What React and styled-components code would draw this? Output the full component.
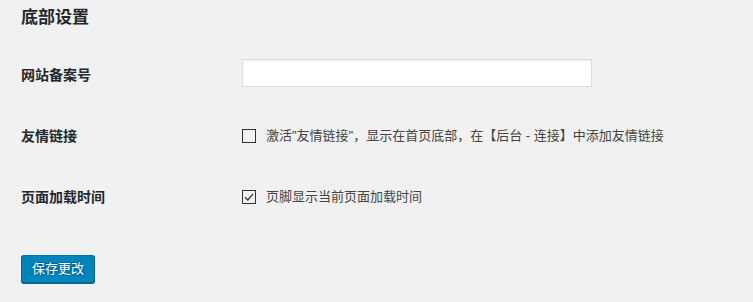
import React from "react";
import styled, { createGlobalStyle } from "styled-components";

const GlobalStyle = createGlobalStyle`
    html, body {
        margin: 0;
        padding: 0;
        background: #f1f1f1;
    }
    body {
        font-family: "Liberation Sans", "Noto Sans CJK SC", sans-serif;
        color: #444;
        font-size: 13px;
    }
`;

const Page = styled.div`
    padding: 7px 0 0 21px;
    width: 753px;
    height: 302px;
    box-sizing: border-box;
`;

const Title = styled.h2`
    margin: 0 0 15px;
    font-size: 17px;
    line-height: 22px;
    font-weight: 700;
    color: #23282d;
`;

const Form = styled.div`
    display: grid;
    grid-template-columns: 221px 1fr;
    grid-auto-rows: 61px;
    align-items: center;
`;

const Label = styled.div`
    font-size: 14px;
    line-height: 20px;
    font-weight: 700;
    color: #23282d;
`;

const Field = styled.div`
    display: flex;
    align-items: center;
    margin-bottom: ${(p) => (p.$lift ? "3px" : "0")};
`;

const TextInput = styled.input`
    width: 350px;
    height: 28px;
    box-sizing: border-box;
    margin: 0;
    padding: 3px 5px;
    background: #fff;
    border: 1px solid #ddd;
    box-shadow: inset 0 1px 2px rgba(0, 0, 0, 0.07);
    font: inherit;
    outline: none;
`;

const CheckLabel = styled.label`
    display: flex;
    align-items: center;
    gap: 10px;
    font-size: 13px;
    line-height: 18px;
    color: #444;
    cursor: pointer;
`;

const Box = styled.span`
    width: 14px;
    height: 14px;
    box-sizing: border-box;
    border: 1px solid #333;
    background: transparent;
    display: flex;
    align-items: center;
    justify-content: center;
`;

const SaveButton = styled.button`
    margin-top: 28px;
    height: 28px;
    padding: 0 10px;
    font: inherit;
    font-size: 13px;
    line-height: 26px;
    color: #fff;
    background: #0085ba;
    border: 1px solid;
    border-color: #0073aa #006799 #006799;
    border-radius: 3px;
    box-shadow: 0 1px 0 #006799;
    text-shadow: 0 -1px 1px #006799, 1px 0 1px #006799, 0 1px 1px #006799,
        -1px 0 1px #006799;
    cursor: pointer;
`;

function Checkbox({ checked, children }) {
    return (
        <CheckLabel>
            <Box>
                {checked && (
                    <svg width="10" height="10" viewBox="0 0 10 10">
                        <polyline
                            points="1,5.2 3.8,8 9,1.8"
                            fill="none"
                            stroke="#333"
                            strokeWidth="1.3"
                        />
                    </svg>
                )}
            </Box>
            <span>{children}</span>
        </CheckLabel>
    );
}

export default function App() {
    return (
        <Page>
            <GlobalStyle />
            <Title>底部设置</Title>
            <Form>
                <Label>网站备案号</Label>
                <Field $lift>
                    <TextInput type="text" />
                </Field>
                <Label>友情链接</Label>
                <Field>
                    <Checkbox>
                        激活"友情链接"，显示在首页底部，在【后台 - 连接】中添加友情链接
                    </Checkbox>
                </Field>
                <Label>页面加载时间</Label>
                <Field>
                    <Checkbox checked>页脚显示当前页面加载时间</Checkbox>
                </Field>
            </Form>
            <SaveButton>保存更改</SaveButton>
        </Page>
    );
}
